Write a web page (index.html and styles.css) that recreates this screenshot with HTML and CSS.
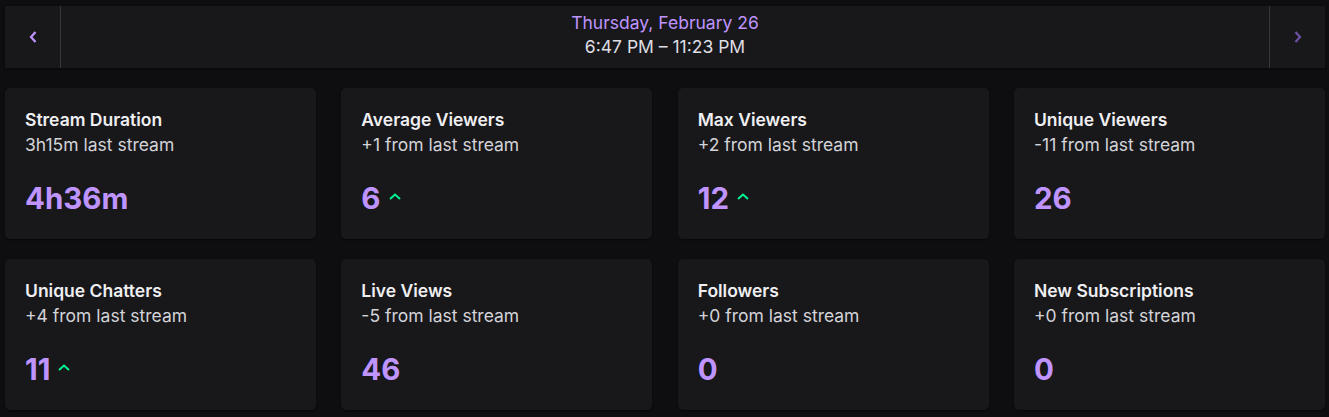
FILE: index.html
```html
<!DOCTYPE html>
<html>
<head>
<meta charset="utf-8">
<link rel="stylesheet" href="styles.css">
</head>
<body>
<div class="page">
  <div class="datebar">
    <button class="nav nav-prev" aria-label="Previous">
      <svg width="8" height="12" viewBox="0 0 8 12"><path d="M6.5 1 L2 6 L6.5 11" fill="none" stroke="currentColor" stroke-width="2.2"/></svg>
    </button>
    <div class="date">
      <div class="date-day">Thursday, February 26</div>
      <div class="date-time">6:47 PM – 11:23 PM</div>
    </div>
    <button class="nav nav-next" aria-label="Next">
      <svg width="8" height="12" viewBox="0 0 8 12"><path d="M1.5 1 L6 6 L1.5 11" fill="none" stroke="currentColor" stroke-width="2.2"/></svg>
    </button>
  </div>
  <div class="grid">
    <div class="card">
      <div class="card-title">Stream Duration</div>
      <div class="card-sub">3h15m last stream</div>
      <div class="card-value"><span>4h36m</span></div>
    </div>
    <div class="card">
      <div class="card-title">Average Viewers</div>
      <div class="card-sub">+1 from last stream</div>
      <div class="card-value"><span>6</span><svg class="up" width="12" height="7" viewBox="0 0 12 7"><path d="M1 6 L6 1.5 L11 6" fill="none" stroke="currentColor" stroke-width="2"/></svg></div>
    </div>
    <div class="card">
      <div class="card-title">Max Viewers</div>
      <div class="card-sub">+2 from last stream</div>
      <div class="card-value"><span>12</span><svg class="up" width="12" height="7" viewBox="0 0 12 7"><path d="M1 6 L6 1.5 L11 6" fill="none" stroke="currentColor" stroke-width="2"/></svg></div>
    </div>
    <div class="card">
      <div class="card-title">Unique Viewers</div>
      <div class="card-sub">-11 from last stream</div>
      <div class="card-value"><span>26</span></div>
    </div>
    <div class="card">
      <div class="card-title">Unique Chatters</div>
      <div class="card-sub">+4 from last stream</div>
      <div class="card-value"><span>11</span><svg class="up" width="12" height="7" viewBox="0 0 12 7"><path d="M1 6 L6 1.5 L11 6" fill="none" stroke="currentColor" stroke-width="2"/></svg></div>
    </div>
    <div class="card">
      <div class="card-title">Live Views</div>
      <div class="card-sub">-5 from last stream</div>
      <div class="card-value"><span>46</span></div>
    </div>
    <div class="card">
      <div class="card-title">Followers</div>
      <div class="card-sub">+0 from last stream</div>
      <div class="card-value"><span>0</span></div>
    </div>
    <div class="card">
      <div class="card-title">New Subscriptions</div>
      <div class="card-sub">+0 from last stream</div>
      <div class="card-value"><span>0</span></div>
    </div>
  </div>
</div>
</body>
</html>
```
FILE: styles.css
```css
* { box-sizing: border-box; }
html, body { margin: 0; padding: 0; background: #0e0e10; }
body { font-family: Inter, "Noto Sans", sans-serif; color: #efeff1; }
.page { padding: 6px 4px 8px 5px; }
.datebar {
  display: flex;
  height: 62px;
  background: #18181b;
  box-shadow: 0 1px 2px rgba(0,0,0,0.5);
}
.nav {
  width: 56px;
  flex: 0 0 56px;
  background: transparent;
  border: 0;
  padding: 0;
  display: flex;
  align-items: center;
  justify-content: center;
  color: #bf94ff;
}
.nav-prev { border-right: 1px solid #35353a; }
.nav-next { border-left: 1px solid #35353a; color: #6e52a3; }
.date {
  flex: 1;
  display: flex;
  flex-direction: column;
  align-items: center;
  justify-content: center;
  padding-bottom: 4px;
  font-size: 17.5px;
  line-height: 24px;
}
.date-day { color: #bf94ff; }
.date-time { color: #dedee3; }
.grid {
  margin-top: 20px;
  display: grid;
  grid-template-columns: repeat(4, 1fr);
  column-gap: 25.33px;
  row-gap: 20px;
}
.card {
  background: #18181b;
  border-radius: 5px;
  padding: 19px 20px 20px;
  height: 151px;
  box-shadow: 0 1px 2px rgba(0,0,0,0.5);
}
.card-title { font-size: 17.5px; line-height: 25px; font-weight: 600; color: #efeff1; }
.card-sub { font-size: 17.5px; line-height: 25px; color: #d3d3d8; }
.card-value {
  margin-top: 21px;
  display: flex;
  align-items: center;
  gap: 8px;
  font-size: 29.5px;
  line-height: 41px;
  font-weight: 700;
  color: #bf94ff;
}
.up { color: #00f593; margin-top: -5px; }
```
